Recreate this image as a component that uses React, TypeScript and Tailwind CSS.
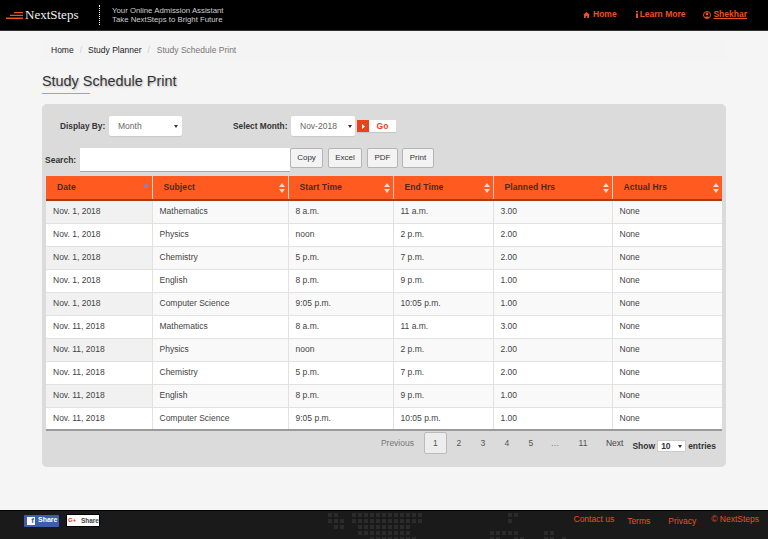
import React from "react";

const rows = [
  ["Nov. 1, 2018", "Mathematics", "8 a.m.", "11 a.m.", "3.00", "None"],
  ["Nov. 1, 2018", "Physics", "noon", "2 p.m.", "2.00", "None"],
  ["Nov. 1, 2018", "Chemistry", "5 p.m.", "7 p.m.", "2.00", "None"],
  ["Nov. 1, 2018", "English", "8 p.m.", "9 p.m.", "1.00", "None"],
  ["Nov. 1, 2018", "Computer Science", "9:05 p.m.", "10:05 p.m.", "1.00", "None"],
  ["Nov. 11, 2018", "Mathematics", "8 a.m.", "11 a.m.", "3.00", "None"],
  ["Nov. 11, 2018", "Physics", "noon", "2 p.m.", "2.00", "None"],
  ["Nov. 11, 2018", "Chemistry", "5 p.m.", "7 p.m.", "2.00", "None"],
  ["Nov. 11, 2018", "English", "8 p.m.", "9 p.m.", "1.00", "None"],
  ["Nov. 11, 2018", "Computer Science", "9:05 p.m.", "10:05 p.m.", "1.00", "None"],
];

const columns = [
  { label: "Date", width: "w-[106px]" },
  { label: "Subject", width: "w-[136px]" },
  { label: "Start Time", width: "w-[105px]" },
  { label: "End Time", width: "w-[100px]" },
  { label: "Planned Hrs", width: "w-[119px]" },
  { label: "Actual Hrs", width: "w-[110px]" },
];

const SortIcon = ({ active }: { active?: boolean }) =>
  active ? (
    <svg width="6" height="5" viewBox="0 0 6 5" className="absolute right-[3px] top-[7px]">
      <path d="M3 0 6 5H0z" fill="#7b87d6" />
    </svg>
  ) : (
    <svg width="6" height="10" viewBox="0 0 6 10" className="absolute right-[3px] top-[7px]">
      <path d="M3 0 6 4H0zM3 10 0 6H6z" fill="#f2d9cf" />
    </svg>
  );

const MapDots = () => {
  // rough dotted world map behind the footer: [column, row, count]
  const cells = [
    [0, 0, 2], [4, 0, 12], [30, 0, 2],
    [0, 1, 3], [4, 1, 12], [30, 1, 1],
    [1, 2, 2], [5, 2, 9],
    [5, 3, 9], [27, 3, 5], [36, 3, 2],
    [7, 4, 8], [27, 4, 2], [31, 4, 2], [36, 4, 2], [39, 4, 1],
  ];
  return (
    <svg width="250" height="29" viewBox="0 0 250 29" className="absolute left-[328px] top-0">
      {cells.flatMap(([x, y, n]) =>
        Array.from({ length: n }, (_, i) => (
          <rect key={`${x}-${y}-${i}`} x={(x + i) * 6} y={y * 6 + 2} width="4" height="4" fill="#2b2b2b" />
        ))
      )}
    </svg>
  );
};

const Header = () => (
  <header className="h-[31px] bg-black border-b border-[#333] flex items-center shrink-0">
    <div className="flex items-center ml-[6px] w-[93px]">
      <svg width="17" height="7" viewBox="0 0 17 7" className="mr-[2px]">
        <path d="M8 0h9v1.3H8zM4 2.8h13v1.3H4zM0 5.6h17v1.3H0z" fill="#f0501e" />
      </svg>
      <span className="text-[#f2f2f2] text-[13px] font-['Liberation_Serif',serif]">NextSteps</span>
    </div>
    <div className="h-[20px] border-l border-dotted border-white" />
    <div className="ml-[12px] text-[#cfcfcf] leading-[9.5px] text-[7.8px]">
      <div>Your Online Admission Assistant</div>
      <div>Take NextSteps to Bright Future</div>
    </div>
    <nav className="ml-auto mr-[21px] flex items-center text-[#f0501e] font-bold text-[8.5px] -mt-[1px]">
      <span className="flex items-center gap-[3px]">
        <svg width="7" height="6" viewBox="0 0 7 6">
          <path d="M3.5 0 7 3H6v3H4.2V4H2.8v2H1V3H0z" fill="#f0501e" />
        </svg>
        Home
      </span>
      <span className="flex items-center gap-[2px] ml-[19px]">
        <svg width="2" height="7" viewBox="0 0 2 7">
          <path d="M0 0h2v1.5H0zM0 2.5h2V7H0z" fill="#f0501e" />
        </svg>
        Learn More
      </span>
      <span className="flex items-center gap-[2px] ml-[18px]">
        <svg width="8" height="8" viewBox="0 0 8 8">
          <circle cx="4" cy="4" r="3.5" fill="none" stroke="#f0501e" />
          <circle cx="4" cy="3" r="1.4" fill="#f0501e" />
          <path d="M1.5 6.5C2 5 6 5 6.5 6.5L4 7.5z" fill="#f0501e" />
        </svg>
        <span className="underline">Shekhar</span>
      </span>
    </nav>
  </header>
);

const SelectBox = ({ label, className }: { label: string; className: string }) => (
  <div className={`h-[20px] bg-white rounded-[2px] flex items-center justify-between text-[8.5px] text-[#666] shadow-[0_1px_1px_rgba(0,0,0,0.08)] ${className}`}>
    <span>{label}</span>
    <svg width="4" height="3" viewBox="0 0 4 3" className="mr-[1px]">
      <path d="M0 0h4L2 3z" fill="#333" />
    </svg>
  </div>
);

const ToolButton = ({ label, className }: { label: string; className: string }) => (
  <button className={`h-[20px] bg-[#f3f3f3] border border-[#b5b5b5] rounded-[2px] text-[8px] text-[#333] ${className}`}>
    {label}
  </button>
);

const PageLink = ({ label, className }: { label: string; className: string }) => (
  <span className={`text-center ${className}`}>{label}</span>
);

const App: React.FC = () => {
  return (
    <div className="h-[539px] w-[768px] overflow-hidden bg-[#f5f5f5] flex flex-col font-['Liberation_Sans',Arial,sans-serif]">
      <Header />
      <main className="flex-1 pl-[42px] pr-[42px]">
        <div className="h-[21px] mt-[9px] flex items-center pl-[9px] text-[8.5px] text-[#222] bg-[#f4f4f4]">
          <span>Home</span>
          <span className="mx-[6px] text-[#ccc]">/</span>
          <span>Study Planner</span>
          <span className="mx-[6px] text-[#ccc]">/</span>
          <span className="text-[#777] ml-[1px]">Study Schedule Print</span>
        </div>
        <h1 className="mt-[10px] text-[14.4px] leading-[20px] text-[#333] [text-shadow:1px_1px_2px_rgba(0,0,0,0.25)]">
          Study Schedule Print
        </h1>
        <div className="w-[48px] h-[1px] bg-[#ee8a66] mt-[2px]" />

        <section className="mt-[10px] h-[363px] bg-[#dbdbdb] rounded-[5px] pt-[12px] px-[3px]">
          <div className="flex items-center h-[20px]">
            <span className="ml-[15px] text-[8.3px] font-bold text-[#333] w-[46px]">Display By:</span>
            <SelectBox label="Month" className="w-[73px] ml-[3px] pl-[9px] pr-[3px]" />
            <span className="ml-[51px] text-[8.3px] font-bold text-[#333] w-[55px] whitespace-nowrap">Select Month:</span>
            <SelectBox label="Nov-2018" className="w-[64px] ml-[3px] pl-[9px] pr-[2px]" />
            <div className="ml-[2px] w-[39px] h-[12px] bg-white rounded-[1px] flex items-center text-[8.5px] font-bold text-[#e8431a] shadow-[0_1px_1px_rgba(0,0,0,0.1)]">
              <span className="w-[12px] h-[12px] bg-[#e8431a] flex items-center justify-center">
                <svg width="3" height="5" viewBox="0 0 3 5">
                  <path d="M0 0 3 2.5 0 5z" fill="#fff" />
                </svg>
              </span>
              <span className="flex-1 text-center">Go</span>
            </div>
          </div>

          <div className="flex items-center h-[24px] mt-[12px]">
            <span className="text-[8.5px] font-bold text-[#333] w-[35px]">Search:</span>
            <div className="h-[24px] w-[210px] bg-white border-b border-[#aaa]" />
            <div className="flex items-center mb-[4px]">
              <ToolButton label="Copy" className="w-[33px]" />
              <ToolButton label="Excel" className="w-[34px] ml-[5px]" />
              <ToolButton label="PDF" className="w-[31px] ml-[5px]" />
              <ToolButton label="Print" className="w-[32px] ml-[4px]" />
            </div>
          </div>

          <table className="mt-[4px] ml-[1px] w-[676px] table-fixed border-collapse text-[8.5px]">
            <thead>
              <tr className="h-[24px] bg-[#ff5a1f] border-b-2 border-[#a93c14]">
                {columns.map((col, i) => (
                  <th
                    key={col.label}
                    className={`relative pl-[11px] text-left font-bold tracking-[0.1px] text-[#4a2a20] border-r border-[#f2d0c2] last:border-r-0 ${col.width}`}
                  >
                    {col.label}
                    <SortIcon active={i === 0} />
                  </th>
                ))}
              </tr>
            </thead>
            <tbody className="border-b-2 border-[#9a9a9a]">
              {rows.map((row, i) => (
                <tr key={i} className={`h-[23px] border-b border-[#e2e2e2] ${i % 2 === 0 ? "bg-[#f9f9f9]" : "bg-white"}`}>
                  {row.map((cell, j) => (
                    <td
                      key={j}
                      className={`pl-[7px] text-[#444] border-r border-[#e2e2e2] last:border-r-0 ${j === 0 && i % 2 === 0 ? "bg-[#f1f1f1]" : ""}`}
                    >
                      {cell}
                    </td>
                  ))}
                </tr>
              ))}
            </tbody>
          </table>

          <div className="flex items-start justify-end mt-[1px] mr-[7px] text-[8.5px] text-[#555]">
            <div className="flex items-center h-[22px]">
              <PageLink label="Previous" className="text-[#777] mr-[10px]" />
              <span className="w-[23px] h-[22px] flex items-center justify-center border border-[#bbb] rounded-[2px] bg-[#ededed] text-[#555]">1</span>
              <PageLink label="2" className="w-[24px]" />
              <PageLink label="3" className="w-[24px]" />
              <PageLink label="4" className="w-[24px]" />
              <PageLink label="5" className="w-[24px]" />
              <PageLink label="…" className="w-[24px] text-[#777]" />
              <PageLink label="11" className="w-[32px]" />
              <PageLink label="Next" className="ml-[7px] text-[#444]" />
            </div>
            <div className="flex items-center ml-[9px] mt-[8px] font-bold text-[8.5px] text-[#333]">
              Show
              <span className="mx-[2px] w-[29px] h-[12px] bg-white border border-[#ccc] flex items-center justify-between px-[3px]">
                10
                <svg width="4" height="3" viewBox="0 0 4 3">
                  <path d="M0 0h4L2 3z" fill="#333" />
                </svg>
              </span>
              entries
            </div>
          </div>
        </section>
      </main>

      <footer className="relative h-[29px] bg-[#1a1a1a] border-t border-black shrink-0 flex items-start">
        <MapDots />
        <div className="relative ml-[24px] mt-[3px] flex items-center gap-[7px]">
          <div className="w-[35px] h-[12px] bg-[#3b5fa8] rounded-[1px] flex items-center text-white text-[7px] font-bold">
            <span className="ml-[3px] w-[8px] h-[8px] bg-white text-[#3b5fa8] text-[8px] leading-[8px] text-right pr-[1px]">f</span>
            <span className="ml-[3px]">Share</span>
          </div>
          <div className="w-[34px] h-[13px] bg-white border border-black flex items-center text-[#444] text-[6.5px] font-bold">
            <span className="ml-[1px] text-[#e0392b] text-[6px] w-[11px]">G+</span>
            <span className="ml-[2px]">Share</span>
          </div>
        </div>
        <div className="relative ml-auto mr-[9px] flex text-[#e8501f] text-[8.5px]">
          <span className="mt-[2px]">Contact us</span>
          <span className="ml-[13px] mt-[4px]">Terms</span>
          <span className="ml-[18px] mt-[4px]">Privacy</span>
          <span className="ml-[15px] mt-[2px]">© NextSteps</span>
        </div>
      </footer>
    </div>
  );
};

export default App;
